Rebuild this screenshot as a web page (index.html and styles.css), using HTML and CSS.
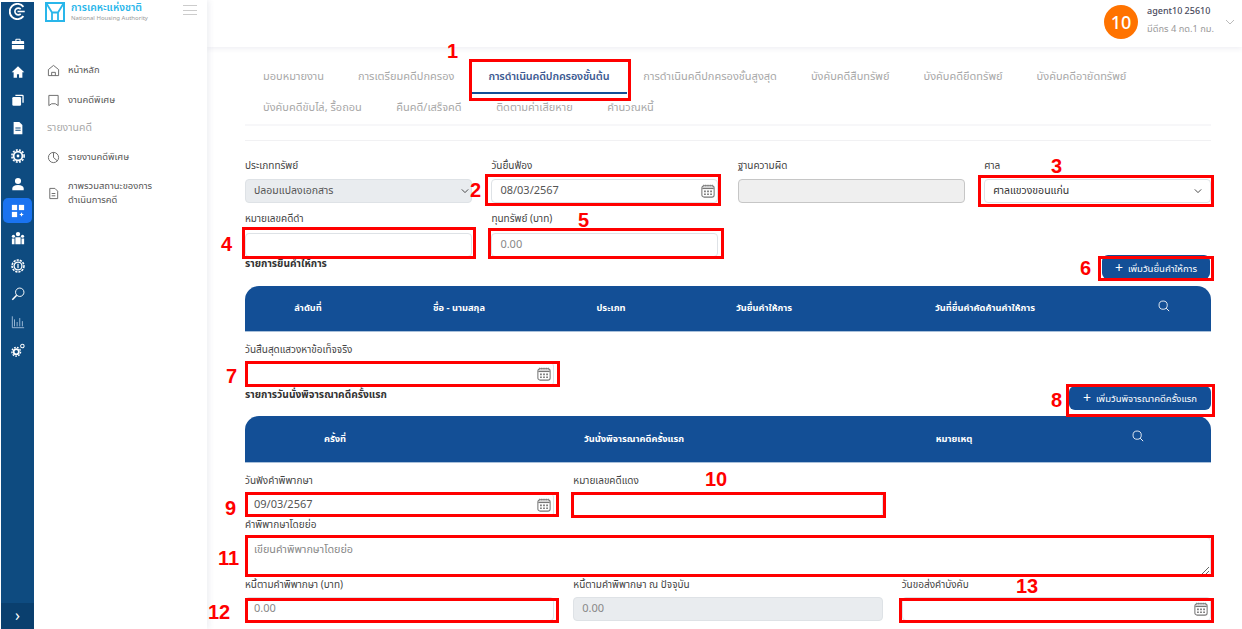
FILE: index.html
```html
<!DOCTYPE html>
<html lang="th">
<head>
<meta charset="utf-8">
<title>การดำเนินคดีปกครองชั้นต้น</title>
<link rel="stylesheet" href="styles.css">
</head>
<body>
<svg class="sprite" width="0" height="0" aria-hidden="true">
  <symbol id="cal" viewBox="0 0 16 16">
    <rect x="1" y="2" width="14" height="13" rx="2.500" fill="none" stroke="#777" stroke-width="1.200"/>
    <path d="M1.500 5h13" stroke="#777" stroke-width="1.600"/>
    <path d="M3 .8v2M5 .8v2M7 .8v2M9 .8v2M11 .8v2M13 .8v2" stroke="#777" stroke-width=".9"/>
    <path d="M3.500 7.500h2v1.800h-2zM7 7.500h2v1.800h-2zM10.500 7.500h2v1.800h-2zM3.500 10.900h2v1.800h-2zM7 10.900h2v1.800h-2zM10.500 10.900h2v1.800h-2z" fill="#777"/>
  </symbol>
  <symbol id="search" viewBox="0 0 14 14">
    <circle cx="6" cy="6" r="4.800" fill="none" stroke="#fff" stroke-width="1"/>
    <path d="M9.500 9.500l3.500 3.500" stroke="#fff" stroke-width="1.100"/>
  </symbol>
  <symbol id="chev" viewBox="0 0 10 6">
    <path d="M1 1l4 4 4-4" fill="none" stroke="#444" stroke-width="1.200"/>
  </symbol>
</svg>
<div class="app">
  <nav class="rail">
    <svg class="rail-logo" viewBox="0 0 20 20"><path d="M17 4.500A9 9 0 1 0 17 15.500" fill="none" stroke="#fff" stroke-width="2.200"/><path d="M13.800 7.200a4 4 0 1 0 0 5.600" fill="none" stroke="#fff" stroke-width="1.900"/><path d="M10 10h8.500" stroke="#fff" stroke-width="1.800"/></svg>
    <span class="rail-item"><svg viewBox="0 0 16 16"><path d="M1 5.500a1 1 0 0 1 1-1h3V3a1 1 0 0 1 1-1h4a1 1 0 0 1 1 1v1.500h3a1 1 0 0 1 1 1V8H1zM1 9h14v4a1 1 0 0 1-1 1H2a1 1 0 0 1-1-1zM6.200 3.200v1.300h3.600V3.200z" fill="#fff"/></svg></span>
    <span class="rail-item"><svg viewBox="0 0 16 16"><path d="M8 1.500L.8 8.300h2.200V14.500h3.800v-4h2.400v4H13V8.300h2.200z" fill="#fff"/></svg></span>
    <span class="rail-item"><svg viewBox="0 0 16 16"><path d="M5 2h8a1.500 1.500 0 0 1 1.500 1.500V11H13V3.500H5z" fill="#fff"/><rect x="1.500" y="4.500" width="10" height="10" rx="1.500" fill="#fff"/></svg></span>
    <span class="rail-item"><svg viewBox="0 0 16 16"><path d="M3 1h6.500L13 4.500V15H3z" fill="#fff"/><path d="M5 8h6M5 10.500h6" stroke="#0e4b80" stroke-width="1.200"/></svg></span>
    <span class="rail-item"><svg viewBox="0 0 16 16"><circle cx="8" cy="8" r="5" fill="none" stroke="#fff" stroke-width="2"/><circle cx="8" cy="8" r="7" fill="none" stroke="#fff" stroke-width="1.800" stroke-dasharray="2.200 1.500"/><circle cx="8" cy="8" r="1.600" fill="#fff"/></svg></span>
    <span class="rail-item"><svg viewBox="0 0 16 16"><circle cx="8" cy="4.500" r="3.500" fill="#fff"/><path d="M1.500 15v-2c0-2.500 2.500-4 6.500-4s6.500 1.500 6.500 4v2z" fill="#fff"/></svg></span>
    <span class="rail-item rail-active"><svg viewBox="0 0 16 16"><rect x="1" y="1" width="6" height="6" fill="#fff"/><rect x="9" y="1" width="6" height="6" fill="#fff"/><rect x="1" y="9" width="6" height="6" fill="#fff"/><path d="M12 10v4M10 12h4" stroke="#fff" stroke-width="1.400"/></svg></span>
    <span class="rail-item"><svg viewBox="0 0 16 16"><circle cx="8" cy="3.500" r="2.500" fill="#fff"/><circle cx="2.800" cy="6" r="1.800" fill="#fff"/><circle cx="13.200" cy="6" r="1.800" fill="#fff"/><path d="M5 7h6v8H5zM1 8.500h3V15H1zM12 8.500h3V15h-3z" fill="#fff"/></svg></span>
    <span class="rail-item"><svg viewBox="0 0 16 16"><circle cx="8" cy="8" r="4.500" fill="none" stroke="#fff" stroke-width="1.500"/><circle cx="8" cy="8" r="6.800" fill="none" stroke="#fff" stroke-width="1.800" stroke-dasharray="2.500 1.200"/><path d="M8 5.500v5" stroke="#fff" stroke-width="1.400"/></svg></span>
    <span class="rail-item"><svg viewBox="0 0 16 16"><circle cx="10" cy="6" r="4.800" fill="none" stroke="#fff" stroke-width="1.100"/><path d="M6.500 9.500L1.500 14.500" stroke="#fff" stroke-width="1.800"/></svg></span>
    <span class="rail-item"><svg viewBox="0 0 16 16"><path d="M1.500 1.500V14.500H15M4 5v8M7 8v5M10 3.500V13M13 7v6" fill="none" stroke="#a9c4de" stroke-width="1"/></svg></span>
    <span class="rail-item"><svg viewBox="0 0 16 16"><circle cx="6" cy="10" r="3" fill="none" stroke="#fff" stroke-width="2"/><circle cx="6" cy="10" r="5" fill="none" stroke="#fff" stroke-width="1.500" stroke-dasharray="2 1.400"/><circle cx="13" cy="3.500" r="2" fill="none" stroke="#fff" stroke-width="1.200"/></svg></span>
    <span class="rail-foot">›</span>
  </nav>

  <aside class="side">
    <div class="brand">
      <svg class="brand-logo" viewBox="0 0 20 20"><path d="M1 1h18v18H1z" fill="none" stroke="#29b6ea" stroke-width="2"/><path d="M1.500 1.500L7 10.500V18.500M18.500 1.500L13 10.500V18.500M7 10.500h6" fill="none" stroke="#29b6ea" stroke-width="1.800"/></svg>
      <div class="brand-text">
        <div class="brand-th">การเคหะแห่งชาติ</div>
        <div class="brand-en">National Housing Authority</div>
      </div>
      <div class="burger"><i></i><i></i><i></i></div>
    </div>
    <ul class="menu">
      <li class="menu-item"><svg viewBox="0 0 14 14"><path d="M1.500 6L7 1.500 12.500 6v6.500h-11zM5 12.500V9h4v3.500" fill="none" stroke="#666" stroke-width="1"/></svg><span>หน้าหลัก</span></li>
      <li class="menu-item"><svg viewBox="0 0 14 14"><path d="M2 1.500h10v11L9 10.500H5L2 12.500z" fill="none" stroke="#666" stroke-width="1"/></svg><span>งานคดีพิเศษ</span></li>
      <li class="menu-title">รายงานคดี</li>
      <li class="menu-item menu-report"><svg viewBox="0 0 14 14"><circle cx="7" cy="7" r="5.500" fill="none" stroke="#666" stroke-width="1"/><path d="M7 7V1.500M7 7l4 3.500" fill="none" stroke="#666" stroke-width="1"/></svg><span>รายงานคดีพิเศษ</span></li>
      <li class="menu-item menu-two"><svg viewBox="0 0 14 14"><path d="M3 1.500h5.500L11.500 4.500V12.500H3z" fill="none" stroke="#666" stroke-width="1"/><path d="M5 7h4M5 9.500h4" stroke="#666" stroke-width="1"/></svg><span>ภาพรวมสถานะของการ<br>ดำเนินการคดี</span></li>
    </ul>
  </aside>

  <div class="main">
    <header class="topbar">
      <div class="avatar">10</div>
      <div class="who">
        <div class="who-name">agent10 25610</div>
        <div class="who-time">มีดีกร 4 กด.1 กม.</div>
      </div>
      <svg class="who-chev" viewBox="0 0 10 6"><path d="M1 1l4 4 4-4" fill="none" stroke="#aaa" stroke-width=".8"/></svg>
    </header>

    <div class="content">
      <div class="tabs">
        <div class="tab-row">
          <a class="tab">มอบหมายงาน</a>
          <a class="tab">การเตรียมคดีปกครอง</a>
          <a class="tab tab-active">การดำเนินคดีปกครองชั้นต้น</a>
          <a class="tab">การดำเนินคดีปกครองชั้นสูงสุด</a>
          <a class="tab">บังคับคดีสืบทรัพย์</a>
          <a class="tab">บังคับคดียึดทรัพย์</a>
          <a class="tab">บังคับคดีอายัดทรัพย์</a>
        </div>
        <div class="tab-row tab-row-2">
          <a class="tab">บังคับคดีขับไล่, รื้อถอน</a>
          <a class="tab">คืนคดี/เสร็จคดี</a>
          <a class="tab">ติดตามค่าเสียหาย</a>
          <a class="tab">คำนวณหนี้</a>
        </div>
      </div>

      <div class="grid-4 row-first">
        <div class="field"><label>ประเภททรัพย์</label>
          <div class="control"><select class="input is-gray"><option>ปลอมแปลงเอกสาร</option></select><svg class="chev"><use href="#chev"/></svg></div></div>
        <div class="field"><label>วันยื่นฟ้อง</label>
          <div class="control"><input class="input" value="08/03/2567"><svg class="cal"><use href="#cal"/></svg></div></div>
        <div class="field"><label>ฐานความผิด</label>
          <div class="control"><input class="input is-grayer"></div></div>
        <div class="field"><label>ศาล</label>
          <div class="control"><select class="input is-dark"><option>ศาลแขวงขอนแก่น</option></select><svg class="chev chev-far"><use href="#chev"/></svg></div></div>
      </div>
      <div class="grid-4 row-second">
        <div class="field"><label>หมายเลขคดีดำ</label>
          <div class="control"><input class="input"></div></div>
        <div class="field"><label>ทุนทรัพย์ (บาท)</label>
          <div class="control"><input class="input" placeholder="0.00"></div></div>
      </div>

      <div class="sec-head">
        <h3>รายการยื่นคำให้การ</h3>
        <button class="btn btn-a"><span class="plus">+</span>เพิ่มวันยื่นคำให้การ</button>
      </div>
      <table class="tbl tbl-a">
        <thead><tr>
          <th class="a1">ลำดับที่</th><th class="a2">ชื่อ - นามสกุล</th><th class="a3">ประเภท</th><th class="a4">วันยื่นคำให้การ</th><th class="a5">วันที่ยื่นคำคัดค้านคำให้การ</th>
          <th class="a6"><svg class="mag"><use href="#search"/></svg></th>
        </tr></thead>
      </table>

      <div class="grid-3 row-seven">
        <div class="field"><label>วันสิ้นสุดแสวงหาข้อเท็จจริง</label>
          <div class="control"><input class="input"><svg class="cal"><use href="#cal"/></svg></div></div>
      </div>

      <div class="sec-head sec-head-b">
        <h3>รายการวันนั่งพิจารณาคดีครั้งแรก</h3>
        <button class="btn btn-b"><span class="plus">+</span>เพิ่มวันพิจารณาคดีครั้งแรก</button>
      </div>
      <table class="tbl tbl-b">
        <thead><tr>
          <th class="b1">ครั้งที่</th><th class="b2">วันนั่งพิจารณาคดีครั้งแรก</th><th class="b3">หมายเหตุ</th>
          <th class="b4"><svg class="mag"><use href="#search"/></svg></th>
        </tr></thead>
      </table>

      <div class="grid-3 row-nine">
        <div class="field"><label>วันฟังคำพิพากษา</label>
          <div class="control"><input class="input" value="09/03/2567"><svg class="cal"><use href="#cal"/></svg></div></div>
        <div class="field"><label>หมายเลขคดีแดง</label>
          <div class="control"><input class="input"></div></div>
      </div>
      <div class="field field-area"><label>คำพิพากษาโดยย่อ</label>
        <textarea class="area" placeholder="เขียนคำพิพากษาโดยย่อ"></textarea></div>
      <div class="grid-3">
        <div class="field"><label>หนี้ตามคำพิพากษา (บาท)</label>
          <div class="control"><input class="input" placeholder="0.00"></div></div>
        <div class="field"><label>หนี้ตามคำพิพากษา ณ ปัจจุบัน</label>
          <div class="control"><input class="input is-gray" placeholder="0.00"></div></div>
        <div class="field"><label>วันขอส่งคำบังคับ</label>
          <div class="control"><input class="input"><svg class="cal"><use href="#cal"/></svg></div></div>
      </div>
    </div>
  </div>
</div>

<div class="mark box-1"></div><div class="mark box-2"></div><div class="mark box-3"></div><div class="mark box-4"></div>
<div class="mark box-5"></div><div class="mark box-6"></div><div class="mark box-7"></div><div class="mark box-8"></div>
<div class="mark box-9"></div><div class="mark box-10"></div><div class="mark box-11"></div><div class="mark box-12"></div><div class="mark box-13"></div>
<span class="num n-1">1</span><span class="num n-2">2</span><span class="num n-3">3</span><span class="num n-4">4</span>
<span class="num n-5">5</span><span class="num n-6">6</span><span class="num n-7">7</span><span class="num n-8">8</span>
<span class="num n-9">9</span><span class="num n-10">10</span><span class="num n-11">11</span><span class="num n-12">12</span><span class="num n-13">13</span>
</body>
</html>
```
FILE: styles.css
```css
* { box-sizing: border-box; }
html, body { margin: 0; height: 100%; overflow: hidden; background: #fff; }
body {
  position: relative;
  font-family: "Noto Sans", "Noto Sans Thai", "Noto Sans CJK SC", sans-serif;
  font-size: 10px;
  color: #444;
}
.sprite { position: absolute; }
.app { display: flex; height: 629px; }

/* icon rail */
.rail {
  position: relative;
  flex: 0 0 33px;
  margin-left: 1px;
  margin-top: 2px;
  background: #0e4b80;
  display: flex;
  flex-direction: column;
  align-items: center;
  padding-top: 1px;
}
.rail-logo { width: 17px; height: 17px; margin-bottom: 10px; }
.rail-item {
  width: 29px;
  height: 28px;
  display: flex;
  align-items: center;
  justify-content: center;
  flex: none;
  border-radius: 5px;
}
.rail-item svg { width: 14px; height: 14px; }
.rail-active { background: #1a73f0; height: 25px; margin: 0 0 1px; }
.rail-foot {
  position: absolute;
  left: 0; right: 0; bottom: 0;
  height: 26px;
  background: #0a3f6e;
  color: #fff;
  font-size: 16px;
  line-height: 24px;
  text-align: center;
}

/* sidebar */
.side {
  flex: 0 0 173px;
  background: #fff;
  box-shadow: 2px 0 6px rgba(60, 70, 110, .09);
  position: relative;
  z-index: 2;
}
.brand { display: flex; align-items: flex-start; height: 50px; padding: 2px 0 0 11px; }
.brand-logo { width: 20px; height: 20px; flex: none; }
.brand-text { margin-left: 6px; flex: 1; }
.brand-th { font-size: 10.300px; line-height: 11px; color: #29b6ea; font-weight: 600; }
.brand-en { font-size: 6px; line-height: 8px; color: #999; margin-top: 1px; white-space: nowrap; }
.burger { width: 14px; margin: 3px 10px 0 0; display: flex; flex-direction: column; gap: 3.500px; }
.burger i { height: 1px; background: #ccc; display: block; }
.menu { list-style: none; margin: 0; padding: 0 0 0 13px; }
.menu-item { display: flex; align-items: center; height: 30px; color: #555; font-size: 9.400px; line-height: 14px; }
.menu-item svg { width: 13px; height: 13px; margin-right: 8px; flex: none; }
.menu-item:first-child { margin-top: 5px; }
.menu-title { height: 24px; line-height: 24px; color: #aaa; font-size: 10.500px; }
.menu-report { margin-top: 3px; }
.menu-two { height: 30px; margin-top: 6px; }

/* top bar */
.main { flex: 1; min-width: 0; display: flex; flex-direction: column; }
.topbar {
  flex: 0 0 47px;
  display: flex;
  align-items: center;
  justify-content: flex-end;
  padding: 0 7px 4px 0;
  box-shadow: 0 2px 5px rgba(60, 70, 110, .08);
  background: #fff;
}
.avatar {
  width: 34px; height: 34px;
  border-radius: 50%;
  background: #ff7300;
  color: #fff;
  font-size: 18px;
  font-weight: 500;
  line-height: 34px;
  text-align: center;
  margin-right: 9px;
}
.who { width: 67px; margin: 0 11px 3px 0; white-space: nowrap; }
.who-name { font-size: 9px; font-weight: 500; line-height: 14px; color: #4a4a5c; }
.who-time { font-size: 9.300px; line-height: 14px; color: #999; margin-top: 4px; }
.who-chev { width: 10px; height: 6px; }

/* content */
.content { padding: 0 31px 0 38px; flex: 1; }
.tabs { height: 94px; padding-top: 13px; border-bottom: 1px solid #f1f1f3; position: relative; }
.tabs::after { content: ""; position: absolute; left: 0; right: 0; top: 77px; height: 2px; background: #f7f7f9; }
.tab-row { display: flex; height: 34px; padding-left: 18px; gap: 34px; }
.tab-row-2 { height: 26px; gap: 34.500px; }
.tab { font-size: 11px; line-height: 32px; color: #a8a8a8; white-space: nowrap; position: relative; }
.tab-row-2 .tab { line-height: 26px; }
.tab-active { color: #3d5a92; font-weight: 600; font-size: 10.800px; letter-spacing: -.15px; }
.tab-active::after { content: ""; position: absolute; left: -16px; right: -18px; bottom: 0; height: 2px; background: #134f96; }

/* form */
.grid-4 { display: grid; grid-template-columns: repeat(4, 1fr); gap: 0 19.500px; }
.grid-3 { display: grid; grid-template-columns: repeat(3, 1fr); gap: 0 19px; }
.row-first { margin-top: 16px; }
.row-second { margin-top: 7px; }
.row-seven { margin-top: 9px; }
.row-nine { margin-top: 9px; }
.field label { display: block; height: 16px; line-height: 16px; font-size: 10px; color: #444; margin-bottom: 5px; }
.row-first .field label { margin-bottom: 6px; }
.row-second .field label { margin-bottom: 7px; }
.control { position: relative; height: 24px; }
.input {
  width: 100%;
  height: 24px;
  border: 1px solid #dee2e6;
  border-radius: 4px;
  background: #fff;
  padding: 0 8px 4px;
  font: 11px "Noto Sans", "Noto Sans Thai", sans-serif;
  color: #555;
  appearance: none;
  outline: none;
}
select.input { font-size: 10.500px; padding-bottom: 3px; }
.input::placeholder { color: #888; }
.is-gray { background: #e9ecef; }
.is-grayer { background: #efefef; border-color: #c6c6c6; }
.is-dark { color: #333; }
.cal { position: absolute; right: 3px; top: 5px; width: 14px; height: 14px; }
.chev { position: absolute; right: 3px; top: 9px; width: 8px; height: 6px; }
.chev-far { right: 9px; }

.sec-head { display: flex; justify-content: space-between; align-items: flex-start; height: 31px; margin-top: -2px; }
.sec-head-b { height: 30px; margin-top: 0; }
.sec-head h3 { margin: 0; font-size: 10.200px; font-weight: 700; line-height: 16px; color: #333; }
.btn {
  height: 24px;
  border: 0;
  border-radius: 6px;
  background: #134f96;
  color: #fff;
  font: 9.500px "Noto Sans", "Noto Sans Thai", sans-serif;
  padding: 0;
  white-space: nowrap;
}
.btn-a { width: 108px; margin-right: 1px; }
.btn-b { width: 142px; }
.plus { font-size: 14px; margin-right: 5px; vertical-align: -1px; }
.tbl { width: 100%; border-collapse: collapse; table-layout: fixed; }
.tbl th {
  background: #134f96;
  color: #fff;
  font-size: 9.300px;
  font-weight: 700;
  height: 45px;
  padding: 0;
  border-bottom: 1px solid #a9c0da;
  text-align: center;
}
.tbl th:first-child { border-top-left-radius: 14px; }
.tbl th:last-child { border-top-right-radius: 14px; }
.tbl-b th { height: 47px; }
.a1 { width: 126px; }
.a2 { width: 176px; }
.a3 { width: 128px; }
.a4 { width: 178px; }
.a5 { width: 264px; }
.b1 { width: 180px; }
.b2 { width: 418px; }
.b3 { width: 222px; }
.mag { width: 12px; height: 12px; vertical-align: 2px; }

.field-area { height: 60px; margin-top: -1px; }
.area {
  display: block;
  width: 100%;
  height: 39px;
  border: 1px solid #dee2e6;
  border-radius: 4px;
  padding: 3px 8px;
  font: 10.800px "Noto Sans", "Noto Sans Thai", sans-serif;
  outline: none;
}
.area::placeholder { color: #888; }

/* review annotations laid over the screenshot */
.mark { position: absolute; border: 3px solid #f00; z-index: 5; pointer-events: none; }
.box-1 { left: 469px; top: 59px; width: 162px; height: 42px; }
.box-2 { left: 485px; top: 174px; width: 236px; height: 32px; }
.box-3 { left: 978px; top: 175px; width: 236px; height: 32px; }
.box-4 { left: 242px; top: 227px; width: 234px; height: 32px; }
.box-5 { left: 488px; top: 228px; width: 236px; height: 31px; }
.box-6 { left: 1098px; top: 256px; width: 116px; height: 25px; }
.box-7 { left: 245px; top: 361px; width: 315px; height: 26px; }
.box-8 { left: 1066px; top: 384px; width: 149px; height: 33px; }
.box-9 { left: 245px; top: 492px; width: 314px; height: 25px; }
.box-10 { left: 571px; top: 492px; width: 315px; height: 26px; }
.box-11 { left: 245px; top: 535px; width: 969px; height: 42px; }
.box-12 { left: 245px; top: 598px; width: 314px; height: 25px; }
.box-13 { left: 899px; top: 598px; width: 315px; height: 25px; }
.num {
  position: absolute;
  z-index: 6;
  font: 700 20px/20px "Liberation Sans", sans-serif;
  color: #f00;
}
.n-1 { left: 447px; top: 41px; }
.n-2 { left: 470px; top: 180px; }
.n-3 { left: 1051px; top: 156px; }
.n-4 { left: 221px; top: 234px; }
.n-5 { left: 578px; top: 210px; }
.n-6 { left: 1080px; top: 258px; }
.n-7 { left: 226px; top: 366px; }
.n-8 { left: 1051px; top: 390px; }
.n-9 { left: 225px; top: 498px; }
.n-10 { left: 705px; top: 469px; }
.n-11 { left: 218px; top: 548px; }
.n-12 { left: 208px; top: 602px; }
.n-13 { left: 1016px; top: 576px; }
```
